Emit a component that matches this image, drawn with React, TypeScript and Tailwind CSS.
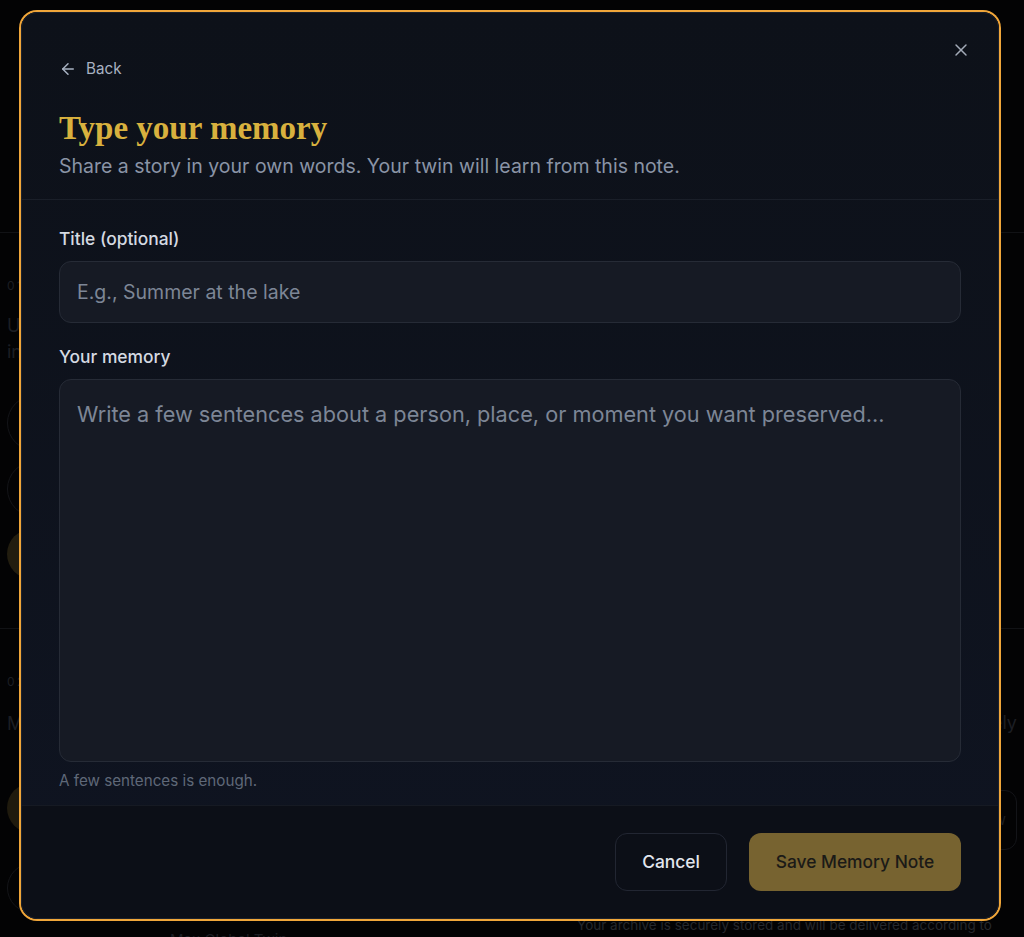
import { ArrowLeft, X } from "lucide-react";

function Background() {
  return (
    <div className="flex h-full w-full flex-col overflow-hidden text-[#1c1e23]">
      <div className="h-[233px] shrink-0 border-b border-[#111215]" />
      <div className="flex h-[396px] shrink-0 justify-between border-b border-[#111215] px-[7px]">
        <div className="flex w-[440px] flex-col pt-[44px]">
          <div className="text-[12px] tracking-[0.2em]">01 · STORIES</div>
          <div className="mt-[18px] text-[18px] leading-[26px]">
            Upload photos, letters and voice notes
            <br />
            into your private archive
          </div>
          <div className="mt-[30px] h-[56px] shrink-0 rounded-full border border-[#131418]" />
          <div className="mt-[10px] h-[56px] shrink-0 rounded-full border border-[#131418]" />
          <div className="mt-[12px] h-[50px] w-[130px] shrink-0 rounded-full bg-[#221d0f]" />
        </div>
      </div>
      <div className="flex shrink-0 justify-between px-[7px]">
        <div className="flex w-[440px] flex-col pt-[44px]">
          <div className="text-[12px] leading-[18px] tracking-[0.2em]">02 · MESSAGES</div>
          <div className="mt-[20px] text-[18px] leading-[26px]">Messages for the people you love</div>
          <div className="mt-[46px] h-[50px] w-[50px] shrink-0 rounded-full bg-[#1f1a0d]" />
          <div className="mt-[30px] h-[50px] w-[50px] shrink-0 rounded-full border border-[#131418]" />
          <div className="mt-[16px] pl-[163px] text-[15px]">Max Global Twin</div>
        </div>
        <div className="flex w-[440px] flex-col items-end pt-[80px]">
          <div className="text-[18px] leading-[27px]">delivered privately</div>
          <div className="mt-[54px] flex h-[60px] w-[60px] shrink-0 items-center justify-end rounded-xl border border-[#131418] pr-[10px] text-[15px]">
            View
          </div>
          <div className="mt-[65px] w-full text-[13.5px] leading-[20px] text-[#26282d]">
            Your archive is securely stored and will be delivered according to
            <br />
            your instructions
          </div>
        </div>
      </div>
    </div>
  );
}

export default function App() {
  return (
    <div className="relative h-[937px] w-[1024px] overflow-hidden bg-[#030304] font-['Inter','Noto_Sans',sans-serif]">
      <Background />
      <div className="absolute left-[21px] top-[12px] flex h-[907px] w-[978px] flex-col rounded-[16px] border border-[#1c212b] bg-gradient-to-b from-[#0d1119] to-[#0f1421] ring-2 ring-[#f0a63a]">
        <button className="absolute right-[27px] top-[27px] text-[#a3abb8]">
          <X size={20} strokeWidth={1.75} />
        </button>
        <div className="flex flex-col border-b border-[#1a1f29] px-[37px] pb-[19px] pt-[46px]">
          <div className="flex h-[20px] items-center gap-[9px] text-[15.2px] text-[#a8b2c2]">
            <ArrowLeft size={18} strokeWidth={2} />
            <span>Back</span>
          </div>
          <h1 className="mt-[29px] font-['Liberation_Serif',serif] text-[33px] font-bold leading-[40px] text-[#d8b13e]">
            Type your memory
          </h1>
          <p className="mt-[4px] text-[19.5px] leading-[28px] text-[#8a94a6]">
            Share a story in your own words. Your twin will learn from this note.
          </p>
        </div>
        <div className="flex flex-1 flex-col px-[37px] pt-[27px]">
          <label className="text-[17.4px] font-medium leading-[24px] text-[#d5dae2]">Title (optional)</label>
          <input
            className="mt-[10px] h-[62px] w-full rounded-[12px] border border-[#262b36] bg-[#161a24] px-[17px] text-[19.5px] text-[#d5dae2] outline-none placeholder:text-[#7d8696]"
            placeholder="E.g., Summer at the lake"
          />
          <label className="mt-[22px] text-[17.4px] font-medium leading-[24px] text-[#d5dae2]">Your memory</label>
          <textarea
            className="mt-[10px] h-[383px] w-full resize-none rounded-[12px] border border-[#262b36] bg-[#161a24] px-[17px] py-[20px] text-[21.7px] leading-[28px] text-[#d5dae2] outline-none placeholder:text-[#7d8696]"
            placeholder="Write a few sentences about a person, place, or moment you want preserved..."
          />
          <p className="mt-[9px] text-[15.2px] leading-[20px] text-[#5f6878]">A few sentences is enough.</p>
        </div>
        <div className="flex justify-end gap-[22px] rounded-b-[16px] border-t border-[#161a23] bg-[#0c0f17] px-[37px] pb-[27px] pt-[27px]">
          <button className="h-[58px] w-[112px] rounded-[12px] border border-[#222632] text-[17.4px] font-medium text-[#e2e6ee]">
            Cancel
          </button>
          <button className="h-[58px] w-[212px] rounded-[12px] bg-[#776330] text-[17.4px] font-medium text-[#1b1a17]">
            Save Memory Note
          </button>
        </div>
      </div>
    </div>
  );
}
